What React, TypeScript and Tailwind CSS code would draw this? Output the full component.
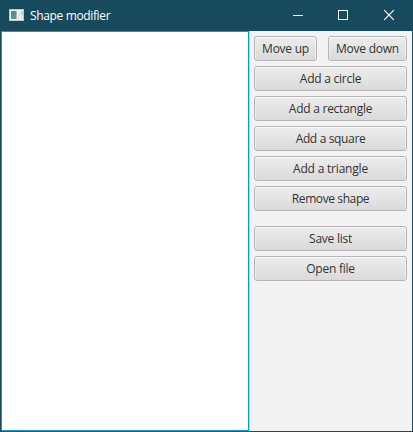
import React from "react";

type ShapeButtonProps = { label: string; className?: string; textClass?: string };

function ShapeButton({
  label,
  className = "w-full",
  textClass = "tracking-[-0.25px]",
}: ShapeButtonProps) {
  return (
    <button
      className={`flex h-[25px] shrink-0 items-center justify-center rounded-[3px] border border-[#b5b5b5] bg-gradient-to-b from-[#ededed] to-[#dadada] text-[12px] leading-[17px] whitespace-nowrap text-[#333333] shadow-[inset_0_1px_0_#fbfbfb,inset_1px_0_0_#eeeeee,inset_-1px_0_0_#eeeeee] ${className}`}
    >
      <span className={textClass}>{label}</span>
    </button>
  );
}

function AppIcon() {
  return (
    <svg className="mb-px" width="15" height="12" viewBox="0 0 15 12" shapeRendering="crispEdges">
      <defs>
        <linearGradient id="pane" x1="0" y1="0" x2="0.6" y2="1">
          <stop offset="0" stopColor="#5583a8" />
          <stop offset="1" stopColor="#4fa080" />
        </linearGradient>
      </defs>
      <rect width="15" height="12" fill="#c3c5c7" />
      <rect x="1" y="1" width="13" height="10" fill="#f1f2f2" />
      <rect x="2" y="2" width="6" height="8" fill="url(#pane)" />
      <rect x="7" y="2" width="1" height="8" fill="#9dbdb5" />
      <rect x="9" y="3" width="2" height="7" fill="#e3e5e6" />
      <rect x="12" y="2" width="2" height="4" fill="#bcd8c8" />
      <rect x="12" y="6" width="2" height="4" fill="#dfe4e2" />
    </svg>
  );
}

export default function App() {
  return (
    <div className="flex h-[432px] w-[413px] flex-col overflow-hidden bg-[#184a5e] font-['Open_Sans','Noto_Sans',sans-serif]">
      <header className="flex h-[31px] shrink-0 items-center pl-[9px] text-white">
        <AppIcon />
        <span className="ml-[6px] text-[12px] leading-[17px] tracking-[-0.36px] whitespace-nowrap">
          Shape modifier
        </span>
        <svg className="ml-auto" width="133" height="31" viewBox="0 0 133 31" fill="none" stroke="white">
          <path d="M13 15.5h10" shapeRendering="crispEdges" />
          <rect x="58.5" y="10.5" width="9" height="9" shapeRendering="crispEdges" />
          <path d="M104.2 10.2l9.6 9.6M113.8 10.2l-9.6 9.6" strokeWidth="1.2" />
        </svg>
      </header>
      <main className="mx-px mb-px flex min-h-0 flex-1 bg-[#f3f3f3]">
        <section className="w-[248px] shrink-0 border border-[#039ed3] bg-white" />
        <aside className="flex min-w-0 flex-1 flex-col gap-[5px] border-l border-[#a6dcee] pt-[5px] pr-[5px] pl-[4px]">
          <div className="flex justify-between">
            <ShapeButton label="Move up" className="w-[63px]" />
            <ShapeButton label="Move down" className="w-[79px]" />
          </div>
          <ShapeButton label="Add a circle" />
          <ShapeButton label="Add a rectangle" />
          <ShapeButton label="Add a square" textClass="tracking-[-0.35px]" />
          <ShapeButton label="Add a triangle" textClass="tracking-[-0.2px]" />
          <ShapeButton label="Remove shape" textClass="tracking-[-0.4px]" />
          <div className="mt-[10px] flex flex-col gap-[5px]">
            <ShapeButton label="Save list" />
            <ShapeButton label="Open file" />
          </div>
        </aside>
      </main>
    </div>
  );
}
